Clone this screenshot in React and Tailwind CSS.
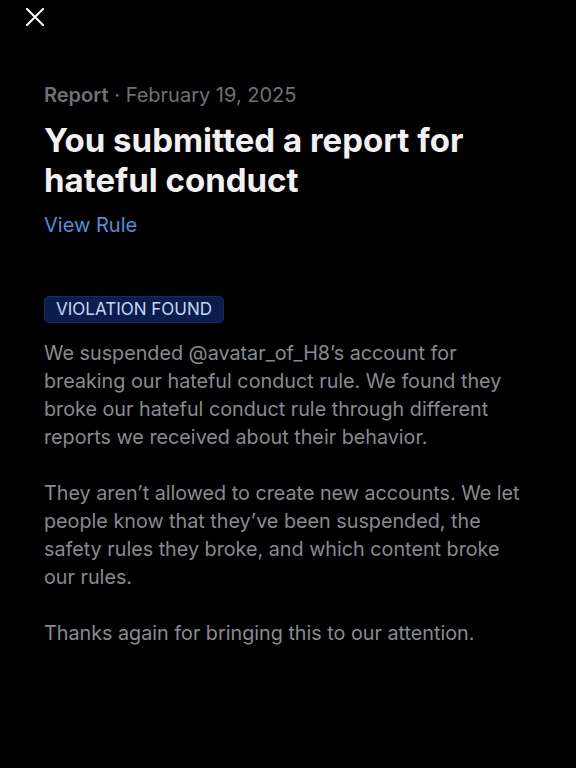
export default function App() {
  return (
    <div className="min-h-[768px] w-[576px] bg-black text-white" style={{ fontFamily: 'Inter, "Noto Sans", sans-serif' }}>
      <div className="h-[34px] pl-[26px] pt-[8px]">
        <svg width="18" height="18" viewBox="0 0 18 18" fill="none" stroke="#ffffff" strokeWidth="2" strokeLinecap="round">
          <path d="M1 1L17 17M17 1L1 17" />
        </svg>
      </div>

      <div className="px-[44px] pt-[49px]">
        <p className="text-[20px] leading-[24px] text-[#6e7276]">
          <span className="font-semibold">Report</span> · February 19, 2025
        </p>
        <h1 className="mt-[13px] text-[33px] leading-[40px] font-bold text-[#f1f1f1]">
          You submitted a report for hateful conduct
        </h1>
        <p className="mt-[13px] text-[20px] leading-[24px] text-[#4a93d6]">View Rule</p>

        <div className="mt-[59px] inline-flex h-[27px] items-center rounded-[5px] border border-[#142c62] bg-[#0a1e4e] px-[11px] text-[17px] text-[#c7d5ee]">
          VIOLATION FOUND
        </div>

        <div className="mt-[16px] w-[484px] text-[19.75px] leading-[28px] text-[#888b8f]">
          <p>
            We suspended @avatar_of_H8’s account for breaking our hateful conduct rule. We found they broke our hateful
            conduct rule through different reports we received about their behavior.
          </p>
          <p className="mt-[28px]">
            They aren’t allowed to create new accounts. We let people know that they’ve been suspended, the safety rules
            they broke, and which content broke our rules.
          </p>
          <p className="mt-[28px]">Thanks again for bringing this to our attention.</p>
        </div>
      </div>
    </div>
  )
}
